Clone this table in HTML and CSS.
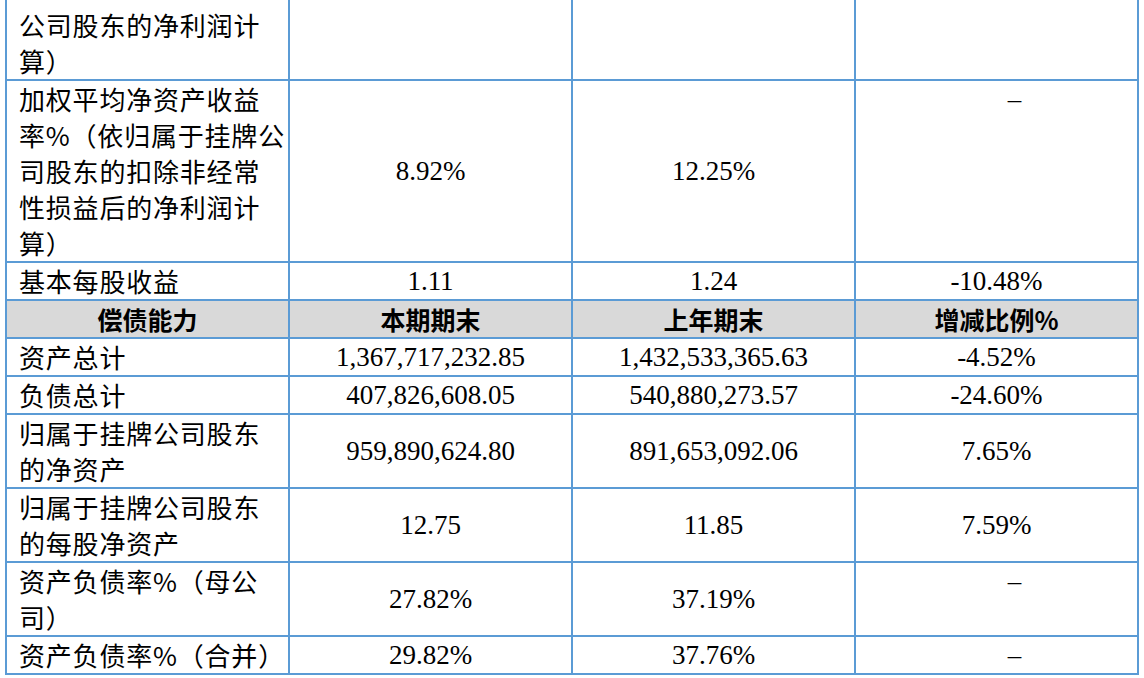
FILE: index.html
```html
<!DOCTYPE html>
<html lang="zh-CN">
<head>
<meta charset="utf-8">
<title>财务指标</title>
<link rel="stylesheet" href="styles.css">
</head>
<body>
<div class="viewport">
<table class="fin">
  <colgroup><col><col><col><col></colgroup>
  <tbody>
    <tr class="cont">
      <td class="label">公司股东的净利润计<br>算）</td>
      <td></td>
      <td></td>
      <td></td>
    </tr>
    <tr>
      <td class="label">加权平均净资产收益<br>率%（依归属于挂牌公<br>司股东的扣除非经常<br>性损益后的净利润计<br>算）</td>
      <td class="num">8.92%</td>
      <td class="num">12.25%</td>
      <td class="dash">–</td>
    </tr>
    <tr>
      <td class="label">基本每股收益</td>
      <td class="num">1.11</td>
      <td class="num">1.24</td>
      <td class="num">-10.48%</td>
    </tr>
    <tr class="head">
      <th>偿债能力</th>
      <th>本期期末</th>
      <th>上年期末</th>
      <th>增减比例%</th>
    </tr>
    <tr>
      <td class="label">资产总计</td>
      <td class="num">1,367,717,232.85</td>
      <td class="num">1,432,533,365.63</td>
      <td class="num">-4.52%</td>
    </tr>
    <tr>
      <td class="label">负债总计</td>
      <td class="num">407,826,608.05</td>
      <td class="num">540,880,273.57</td>
      <td class="num">-24.60%</td>
    </tr>
    <tr>
      <td class="label">归属于挂牌公司股东<br>的净资产</td>
      <td class="num">959,890,624.80</td>
      <td class="num">891,653,092.06</td>
      <td class="num">7.65%</td>
    </tr>
    <tr>
      <td class="label">归属于挂牌公司股东<br>的每股净资产</td>
      <td class="num">12.75</td>
      <td class="num">11.85</td>
      <td class="num">7.59%</td>
    </tr>
    <tr>
      <td class="label">资产负债率%（母公<br>司）</td>
      <td class="num">27.82%</td>
      <td class="num">37.19%</td>
      <td class="dash">–</td>
    </tr>
    <tr>
      <td class="label">资产负债率%（合并）</td>
      <td class="num">29.82%</td>
      <td class="num">37.76%</td>
      <td class="dash">–</td>
    </tr>
  </tbody>
</table>
</div>
</body>
</html>
```

FILE: styles.css
```css
html, body {
  margin: 0;
  padding: 0;
  background: #ffffff;
}

.viewport {
  width: 1144px;
  height: 678px;
  overflow: hidden;
}

.fin {
  margin: 0 0 0 5px;
  width: 1134px;
  table-layout: fixed;
  border-collapse: collapse;
  font-family: "Liberation Serif", "Noto Sans CJK SC", serif;
  font-size: 27px;
  color: #000000;
}

.fin col {
  width: 283px;
}

.fin td,
.fin th {
  border: 2px solid #5b9bd5;
  padding: 0 12px;
  line-height: 36px;
  white-space: nowrap;
  vertical-align: middle;
}

.fin .cont td {
  border-top: 0;
  padding-top: 7px;
}

.fin .label {
  text-align: left;
  letter-spacing: 0.8px;
  font-family: "Noto Sans CJK SC", "Liberation Serif", sans-serif;
  font-size: 26px;
}

.fin .num {
  text-align: center;
}

.fin .dash {
  text-align: center;
  vertical-align: top;
  padding-left: 48px;
  font-size: 27px;
}

.fin .head th {
  background: #d9d9d9;
  font-family: "Noto Sans CJK SC", "Liberation Serif", sans-serif;
  font-size: 25px;
  font-weight: 700;
  text-align: center;
}
```
